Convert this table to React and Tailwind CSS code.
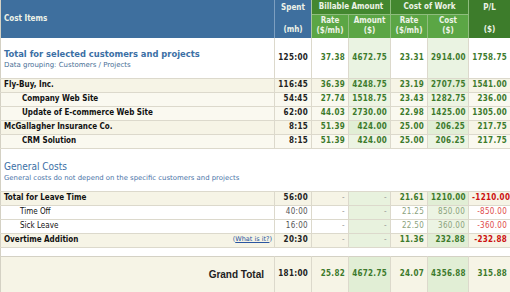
import React from "react";

const V = { fontFamily: '"DejaVu Sans Condensed", "DejaVu Sans", Verdana, sans-serif' };

const projRows = [
  { name: "Fly-Buy, Inc.", level: 0, spent: "116:45", br: "36.39", ba: "4248.75", cr: "23.19", cc: "2707.75", pl: "1541.00" },
  { name: "Company Web Site", level: 1, spent: "54:45", br: "27.74", ba: "1518.75", cr: "23.43", cc: "1282.75", pl: "236.00" },
  { name: "Update of E-commerce Web Site", level: 1, spent: "62:00", br: "44.03", ba: "2730.00", cr: "22.98", cc: "1425.00", pl: "1305.00" },
  { name: "McGallagher Insurance Co.", level: 0, spent: "8:15", br: "51.39", ba: "424.00", cr: "25.00", cc: "206.25", pl: "217.75" },
  { name: "CRM Solution", level: 1, spent: "8:15", br: "51.39", ba: "424.00", cr: "25.00", cc: "206.25", pl: "217.75" },
];

const leaveRows = [
  { name: "Total for Leave Time", level: 0, spent: "56:00", cr: "21.61", cc: "1210.00", pl: "-1210.00" },
  { name: "Time Off", level: 1, spent: "40:00", cr: "21.25", cc: "850.00", pl: "-850.00" },
  { name: "Sick Leave", level: 1, spent: "16:00", cr: "22.50", cc: "360.00", pl: "-360.00" },
  { name: "Overtime Addition", level: 0, spent: "20:30", cr: "11.36", cc: "232.88", pl: "-232.88", link: true },
];

const td = "border-r border-[#dcd9cc] px-[3px] text-right whitespace-nowrap tracking-[0.3px]";

export default function App() {
  return (
    <div className="w-[510px] h-[292px] overflow-hidden bg-white" style={V}>
      <table className="w-[510px] table-fixed border-collapse border-x border-[#d4d1c4]">
        <colgroup>
          <col style={{ width: 274 }} />
          <col style={{ width: 37 }} />
          <col style={{ width: 37 }} />
          <col style={{ width: 42 }} />
          <col style={{ width: 37 }} />
          <col style={{ width: 41 }} />
          <col style={{ width: 42 }} />
        </colgroup>
        <thead className="text-[8px] font-bold text-[#eef3e8]">
          <tr className="h-[14px]">
            <th rowSpan={2} className="bg-[#3e6f9e] border-r border-[#7d9fc0] text-left pl-[3px] align-middle font-bold">Cost Items</th>
            <th rowSpan={2} className="bg-[#3e6f9e] border-r border-[#a9c4a0] p-0 align-top">
              <div className="flex flex-col justify-between h-[38px] py-[2px] items-center">
                <span>Spent</span>
                <span>(mh)</span>
              </div>
            </th>
            <th colSpan={2} className="bg-[#43872f] border-r border-b border-[#8fbd7e] font-bold">Billable Amount</th>
            <th colSpan={2} className="bg-[#43872f] border-r border-b border-[#8fbd7e] font-bold">Cost of Work</th>
            <th rowSpan={2} className="bg-[#3d7c2b] p-0 align-top">
              <div className="flex flex-col justify-between h-[38px] py-[2px] items-center">
                <span>P/L</span>
                <span>($)</span>
              </div>
            </th>
          </tr>
          <tr className="h-[24px] leading-[10px]">
            <th className="bg-[#5ba645] border-r border-[#8fbd7e] font-bold">Rate<br />($/mh)</th>
            <th className="bg-[#5ba645] border-r border-[#8fbd7e] font-bold">Amount<br />($)</th>
            <th className="bg-[#5ba645] border-r border-[#8fbd7e] font-bold">Rate<br />($/mh)</th>
            <th className="bg-[#5ba645] border-r border-[#8fbd7e] font-bold">Cost<br />($)</th>
          </tr>
        </thead>
        <tbody className="text-[8px] font-bold">
          <tr className="h-[40px] border-b border-[#dcd9cc]">
            <td className="border-r border-[#dcd9cc] pl-[3px] align-middle">
              <div className="text-[9.3px] font-bold text-[#3b6fa5] leading-[12px] pt-[2px]">Total for selected customers and projects</div>
              <div className="text-[7px] font-normal text-[#4a6f96] leading-[10px]" style={{ fontFamily: '"DejaVu Sans", sans-serif' }}>Data grouping: Customers / Projects</div>
            </td>
            <td className={`${td} text-[#222]`}>125:00</td>
            <td className={`${td} text-[#3d7a2c]`}>37.38</td>
            <td className={`${td} text-[#3d7a2c] bg-[#eaf3e2]`}>4672.75</td>
            <td className={`${td} text-[#3d7a2c]`}>23.31</td>
            <td className={`${td} text-[#3d7a2c] bg-[#eaf3e2]`}>2914.00</td>
            <td className={`${td} text-[#3d7a2c] border-r-0`}>1758.75</td>
          </tr>
          {projRows.map((r) => {
            const main = r.level === 0;
            return (
              <tr key={r.name} className={`h-[14px] border-b border-[#dcd9cc] ${main ? "bg-[#f6f4e6]" : "bg-[#faf9f0]"}`}>
                <td className={`border-r border-[#dcd9cc] text-[#111] ${main ? "pl-[3px]" : "pl-[21px]"}`}>{r.name}</td>
                <td className={`${td} text-[#222]`}>{r.spent}</td>
                <td className={`${td} text-[#3d7a2c]`}>{r.br}</td>
                <td className={`${td} text-[#3d7a2c] ${main ? "bg-[#e1eed5]" : "bg-[#ecf4e3]"}`}>{r.ba}</td>
                <td className={`${td} text-[#3d7a2c]`}>{r.cr}</td>
                <td className={`${td} text-[#3d7a2c] ${main ? "bg-[#e1eed5]" : "bg-[#ecf4e3]"}`}>{r.cc}</td>
                <td className={`${td} text-[#3d7a2c] border-r-0`}>{r.pl}</td>
              </tr>
            );
          })}
          <tr className="h-[43px] border-b border-[#dcd9cc]">
            <td colSpan={7} className="pl-[3px] align-middle pt-[4px]">
              <div className="text-[10px] font-normal text-[#3b6fa5] leading-[12px]">General Costs</div>
              <div className="text-[6.9px] font-normal text-[#4a74a8] leading-[10px]" style={{ fontFamily: '"DejaVu Sans", sans-serif' }}>General costs do not depend on the specific customers and projects</div>
            </td>
          </tr>
          {leaveRows.map((r) => {
            const main = r.level === 0;
            return (
              <tr key={r.name} className={`h-[14px] border-b border-[#dcd9cc] ${main ? "bg-[#f6f4e6] font-bold" : "bg-white font-normal"}`}>
                <td className={`border-r border-[#dcd9cc] text-[#111] ${main ? "pl-[3px]" : "pl-[19px]"}`}>
                  <div className="flex justify-between items-center pr-[2px]">
                    <span>{r.name}</span>
                    {r.link && (
                      <span className="text-[6.5px] font-normal text-[#2a55a0]" style={{ fontFamily: '"DejaVu Sans", sans-serif' }}>
                        (<span className="underline">What is it?</span>)
                      </span>
                    )}
                  </div>
                </td>
                <td className={`${td} ${main ? "text-[#222]" : "text-[#555]"}`}>{r.spent}</td>
                <td className={`${td} text-[#999] font-normal`}>-</td>
                <td className={`${td} text-[#999] font-normal bg-[#e8f2de]`}>-</td>
                <td className={`${td} ${main ? "text-[#3d7a2c]" : "text-[#8aa27c]"}`}>{r.cr}</td>
                <td className={`${td} ${main ? "text-[#3d7a2c] bg-[#e1eed5]" : "text-[#8aa27c] bg-[#ecf4e3]"}`}>{r.cc}</td>
                <td className={`${td} border-r-0 ${main ? "text-[#cc1111]" : "text-[#e04a4a]"}`}>{r.pl}</td>
              </tr>
            );
          })}
          <tr className="h-[9px] border-b border-[#d4d1c4]">
            <td colSpan={7}></td>
          </tr>
          <tr className="h-[36px] bg-[#f6f4e6] border-b border-[#d4d1c4]">
            <td className="border-r border-[#dcd9cc] text-right pr-[10px] text-[10px] font-bold text-[#222]" style={{ fontFamily: '"Liberation Sans", Arial, sans-serif' }}>Grand Total</td>
            <td className={`${td} text-[#222]`}>181:00</td>
            <td className={`${td} text-[#3d7a2c]`}>25.82</td>
            <td className={`${td} text-[#3d7a2c] bg-[#e1eed5]`}>4672.75</td>
            <td className={`${td} text-[#3d7a2c]`}>24.07</td>
            <td className={`${td} text-[#3d7a2c] bg-[#e1eed5]`}>4356.88</td>
            <td className={`${td} text-[#3d7a2c] border-r-0`}>315.88</td>
          </tr>
        </tbody>
      </table>
    </div>
  );
}
